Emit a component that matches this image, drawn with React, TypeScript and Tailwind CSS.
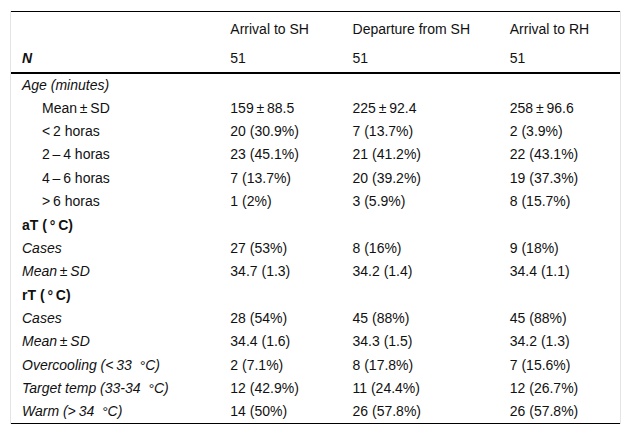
import React from 'react';

type Row = {
  label: React.ReactNode;
  values?: string[];
  kind: 'section' | 'indent' | 'italic' | 'bold';
};

const T = '\u2009';
const deg = <span className="relative top-[1px]">°</span>;

const rows: Row[] = [
  { label: 'Age (minutes)', kind: 'section' },
  { label: `Mean${T}±${T}SD`, values: [`159${T}±${T}88.5`, `225${T}±${T}92.4`, `258${T}±${T}96.6`], kind: 'indent' },
  { label: `<${T}2 horas`, values: ['20 (30.9%)', '7 (13.7%)', '2 (3.9%)'], kind: 'indent' },
  { label: `2${T}–${T}4 horas`, values: ['23 (45.1%)', '21 (41.2%)', '22 (43.1%)'], kind: 'indent' },
  { label: `4${T}–${T}6 horas`, values: ['7 (13.7%)', '20 (39.2%)', '19 (37.3%)'], kind: 'indent' },
  { label: `>${T}6 horas`, values: ['1 (2%)', '3 (5.9%)', '8 (15.7%)'], kind: 'indent' },
  { label: <>aT ({T}{deg}{T}C)</>, kind: 'bold' },
  { label: 'Cases', values: ['27 (53%)', '8 (16%)', '9 (18%)'], kind: 'italic' },
  { label: `Mean${T}±${T}SD`, values: ['34.7 (1.3)', '34.2 (1.4)', '34.4 (1.1)'], kind: 'italic' },
  { label: <>rT ({T}{deg}{T}C)</>, kind: 'bold' },
  { label: 'Cases', values: ['28 (54%)', '45 (88%)', '45 (88%)'], kind: 'italic' },
  { label: `Mean${T}±${T}SD`, values: ['34.4 (1.6)', '34.3 (1.5)', '34.2 (1.3)'], kind: 'italic' },
  { label: <>Overcooling (&lt;{T}33 &nbsp;{deg}C)</>, values: ['2 (7.1%)', '8 (17.8%)', '7 (15.6%)'], kind: 'italic' },
  { label: <>Target temp (33-34 &nbsp;{deg}C)</>, values: ['12 (42.9%)', '11 (24.4%)', '12 (26.7%)'], kind: 'italic' },
  { label: <>Warm (&gt;{T}34 &nbsp;{deg}C)</>, values: ['14 (50%)', '26 (57.8%)', '26 (57.8%)'], kind: 'italic' },
];

export default function App() {
  return (
    <div className="w-[631px] h-[438px] bg-white pt-[11px] text-[14px] text-[#111] font-['Liberation_Sans',Arial,sans-serif]">
      <div className="ml-[10px] w-[611px] border-x border-[#e4e4e4]">
        <table className="w-[609px] table-fixed border-collapse border-t border-b border-black">
          <colgroup>
            <col className="w-[208px]" />
            <col className="w-[122px]" />
            <col className="w-[157px]" />
            <col className="w-[121px]" />
          </colgroup>
          <thead>
            <tr className="h-[33px]">
              <th />
              <th className="pl-[11px] text-left font-normal pt-[2px]">Arrival to SH</th>
              <th className="pl-[11px] text-left font-normal pt-[2px]">Departure from SH</th>
              <th className="pl-[11px] text-left font-normal pt-[2px]">Arrival to RH</th>
            </tr>
            <tr className="h-[28px] border-b-2 border-black">
              <th className="pl-[11px] text-left font-bold italic">N</th>
              <th className="pl-[11px] text-left font-normal">51</th>
              <th className="pl-[11px] text-left font-normal">51</th>
              <th className="pl-[11px] text-left font-normal">51</th>
            </tr>
          </thead>
          <tbody>
            {rows.map((r, i) => (
              <tr key={i} className="h-[23.4px]">
                <td
                  className={`p-0 leading-[16px] whitespace-nowrap ${r.kind === 'indent' ? 'pl-[31px]' : 'pl-[11px]'} ${
                    r.kind === 'section' || r.kind === 'italic' ? 'italic' : ''
                  } ${r.kind === 'bold' ? 'font-bold' : ''}`}
                >
                  {r.label}
                </td>
                {[0, 1, 2].map((c) => (
                  <td key={c} className="p-0 pl-[11px] leading-[16px] whitespace-nowrap">
                    {r.values ? r.values[c] : ''}
                  </td>
                ))}
              </tr>
            ))}
          </tbody>
        </table>
      </div>
    </div>
  );
}
